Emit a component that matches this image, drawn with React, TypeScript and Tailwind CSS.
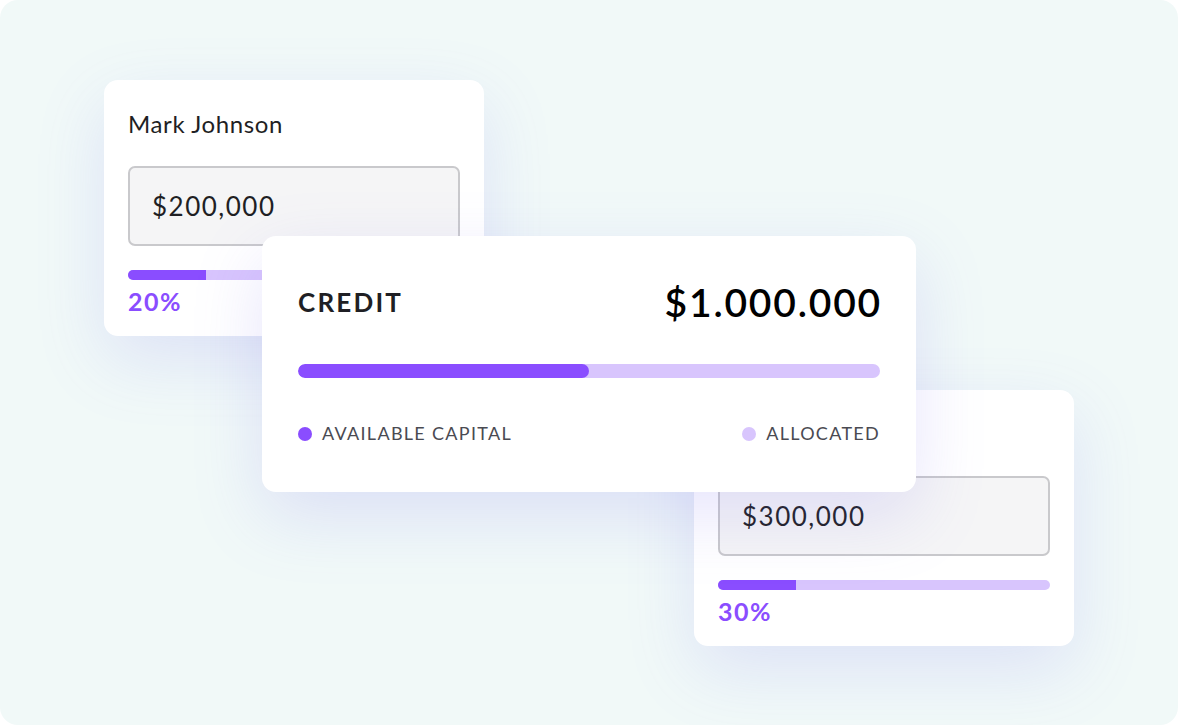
import React from "react";

const FONT = { fontFamily: "Lato, 'Open Sans', sans-serif" };

function AllocationCard({ name, amount, pct, fill }: { name?: string; amount: string; pct: string; fill: number }) {
  return (
    <div className="w-[380px] h-[256px] rounded-[14px] bg-white px-6 pt-[30px] shadow-[0_24px_70px_rgba(120,110,240,0.16)]">
      <div className="h-[28px] text-[24px] leading-[28px] tracking-[0.6px] text-[#1f1f24]">{name}</div>
      <div className="mt-[28px] h-[80px] rounded-[7px] border-2 border-[#c9c9cc] bg-[#f5f5f6] flex items-center px-[22px] text-[26px] tracking-[1.5px] text-[#1f1f24]">
        {amount}
      </div>
      <div className="mt-[24px] h-[10px] w-full rounded-full bg-[#d8c5fd] overflow-hidden">
        <div className="h-full bg-[#8a4dff]" style={{ width: `${fill}%` }} />
      </div>
      <div className="mt-[5px] text-[25px] leading-[32px] font-bold text-[#8a4dff] tracking-[1.5px]">{pct}</div>
    </div>
  );
}

export default function App() {
  return (
    <div style={FONT} className="w-[1178px] h-[726px] bg-white">
      <div className="relative w-[1178px] h-[725px] rounded-[18px] bg-[#f1f9f8] overflow-hidden">
        <div className="absolute left-[104px] top-[80px]">
          <AllocationCard name="Mark Johnson" amount="$200,000" pct="20%" fill={23.5} />
        </div>
        <div className="absolute left-[694px] top-[390px]">
          <AllocationCard amount="$300,000" pct="30%" fill={23.5} />
        </div>
        <div className="absolute left-[262px] top-[236px] w-[654px] h-[256px] rounded-[14px] bg-white px-9 pt-[44px] shadow-[0_24px_70px_rgba(120,110,240,0.18)]">
          <div className="flex items-center justify-between h-[44px]">
            <span className="text-[26px] font-bold tracking-[2.2px] text-[#1f1f24]">CREDIT</span>
            <span className="text-[39px] font-semibold text-black tracking-[1.8px] -mr-[2px]">$1.000.000</span>
          </div>
          <div className="mt-[40px] h-[14px] w-full rounded-full bg-[#d8c5fd] overflow-hidden">
            <div className="h-full w-1/2 rounded-full bg-[#8a4dff]" />
          </div>
          <div className="mt-[42px] flex items-center justify-between text-[18px] tracking-[1.3px] text-[#4a4a52]">
            <div className="flex items-center gap-[10px]">
              <span className="w-[14px] h-[14px] rounded-full bg-[#8a4dff]" />
              AVAILABLE CAPITAL
            </div>
            <div className="flex items-center gap-[10px]">
              <span className="w-[14px] h-[14px] rounded-full bg-[#d8c5fd]" />
              ALLOCATED
            </div>
          </div>
        </div>
      </div>
    </div>
  );
}
